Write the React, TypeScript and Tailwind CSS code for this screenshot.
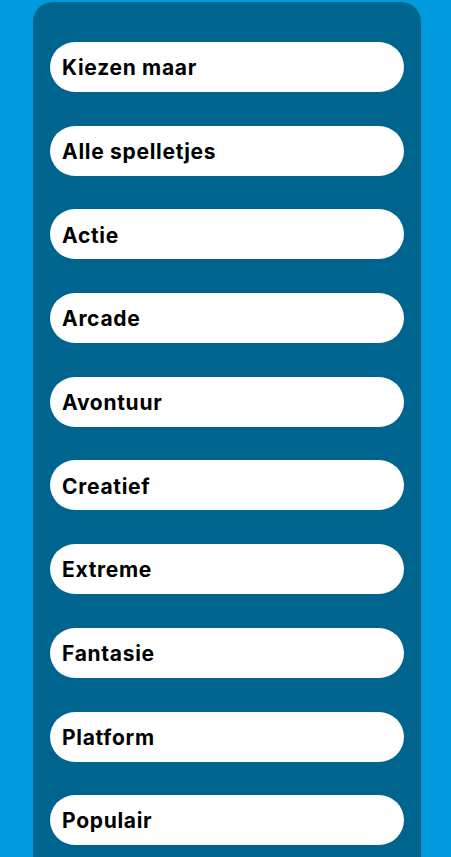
const categories = [
  "Kiezen maar",
  "Alle spelletjes",
  "Actie",
  "Arcade",
  "Avontuur",
  "Creatief",
  "Extreme",
  "Fantasie",
  "Platform",
  "Populair",
];

export default function App() {
  return (
    <div className="min-h-[857px] bg-[#009ade] pl-[33px] pr-[30px] pt-[2px] font-['Inter',sans-serif]">
      <div className="flex min-h-[855px] flex-col gap-[33.7px] rounded-t-[20px] bg-[#00658e] px-[17px] pt-[40px] pb-10">
        {categories.map((c) => (
          <a
            key={c}
            href="#"
            className="flex h-[50px] items-center rounded-full bg-white px-3 pt-[2px] text-[21px] font-bold tracking-[0.7px] text-black"
          >
            {c}
          </a>
        ))}
      </div>
    </div>
  );
}
